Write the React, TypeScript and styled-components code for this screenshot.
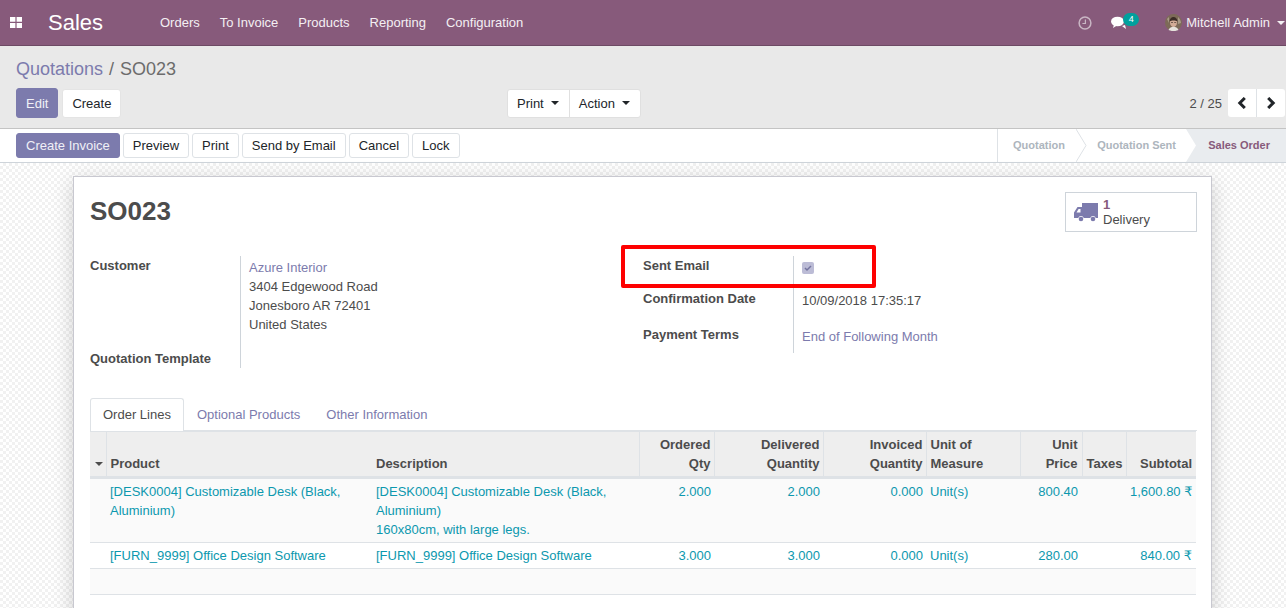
import React from "react";
import styled, { createGlobalStyle } from "styled-components";

const GlobalStyle = createGlobalStyle`
	html, body {
		margin: 0;
		padding: 0;
		height: 100%;
		overflow: hidden;
	}
	body {
		font-family: "Liberation Sans", Arial, sans-serif;
		font-size: 13px;
		line-height: 19px;
		color: #4c4c4c;
		background: #fff;
	}
`;

const Page = styled.div`
	width: 1286px;
	height: 608px;
	overflow: hidden;
	display: flex;
	flex-direction: column;
`;

/* Top navbar */
const Navbar = styled.header`
	flex: none;
	height: 46px;
	box-sizing: border-box;
	background: #875a7b;
	border-bottom: 1px solid #6d4a64;
	display: flex;
	align-items: center;
	color: #fff;
`;

const AppsIcon = styled.svg`
	width: 12px;
	height: 11px;
	margin: 0 0 0 10px;
`;

const Brand = styled.div`
	font-size: 22px;
	margin-left: 26px;
	width: 112px;
	line-height: 45px;
`;

const MenuItem = styled.a`
	margin-right: 20px;
	color: #f4eff3;
`;

const NavRight = styled.div`
	margin-left: auto;
	display: flex;
	align-items: center;
	padding-right: 1px;
`;

const ChatWrap = styled.div`
	position: relative;
	width: 16px;
	height: 14px;
	margin-left: 19px;
	margin-right: 38px;
	display: flex;
`;

const Badge = styled.span`
	position: absolute;
	left: 12px;
	top: -3px;
	width: 16px;
	height: 13px;
	border-radius: 7px;
	background: #00a09d;
	color: #fff;
	font-size: 9px;
	line-height: 12px;
	text-align: center;
`;

const Username = styled.span`
	margin-left: 4px;
	color: #f4eff3;
`;

const Caret = styled.span<{ $color?: string; $gap?: number }>`
	display: inline-block;
	width: 0;
	height: 0;
	border-left: 4px solid transparent;
	border-right: 4px solid transparent;
	border-top: 4px solid ${(p) => p.$color || "#4c4c4c"};
	margin-left: ${(p) => p.$gap ?? 7}px;
	vertical-align: 2px;
`;

/* Control panel */
const ControlPanel = styled.section`
	flex: none;
	height: 83px;
	box-sizing: border-box;
	background: #e9e9e9;
	border-bottom: 1px solid #c4c4c4;
	padding: 12px 1px 0 16px;
`;

const Breadcrumb = styled.div`
	font-size: 18px;
	line-height: 22px;
	color: #6c6c6c;
	margin-bottom: 8px;
`;

const CrumbLink = styled.a`
	color: #7c7bad;
`;

const CrumbSep = styled.span`
	margin: 0 6px;
`;

const PanelRow = styled.div`
	display: grid;
	grid-template-columns: 491px 1fr auto;
	align-items: center;
`;

const ButtonRow = styled.div`
	display: flex;
	align-items: center;
	gap: 4px;
`;

const Button = styled.button<{ $primary?: boolean }>`
	font: inherit;
	box-sizing: border-box;
	height: 25px;
	padding: 0 9px;
	border: 1px solid ${(p) => (p.$primary ? "#7c7bad" : "#dee2e6")};
	border-radius: 3px;
	background: ${(p) => (p.$primary ? "#7c7bad" : "#fff")};
	color: ${(p) => (p.$primary ? "#f0f0f7" : "#212529")};
	white-space: nowrap;
`;

const TopButton = styled(Button)`
	height: ${(p) => (p.$primary ? 30 : 29)}px;
	border-color: ${(p) => (p.$primary ? "#7c7bad" : "#e4e4e4")};
`;

const ButtonGroup = styled.div`
	display: flex;
	height: 29px;
	width: 134px;
	box-sizing: border-box;
	background: #fff;
	border: 1px solid #e0e0e0;
	border-radius: 3px;
`;

const GroupButton = styled.div<{ $divider?: boolean }>`
	display: flex;
	align-items: center;
	padding: 0 10px 0 9px;
	border-left: ${(p) => (p.$divider ? "1px solid #e0e0e0" : "none")};
	color: #212529;
`;

const Pager = styled.div`
	display: flex;
	align-items: center;
	gap: 6px;
	color: #4c4c4c;
`;

const PagerButtons = styled.div`
	display: flex;
	height: 28px;
	background: #fff;
	border-radius: 3px;
`;

const PagerButton = styled.div<{ $divider?: boolean }>`
	width: 28px;
	display: flex;
	align-items: center;
	justify-content: center;
	border-left: ${(p) => (p.$divider ? "1px solid #dee2e6" : "none")};
`;

/* Status bar */
const StatusBar = styled.section`
	flex: none;
	height: 34px;
	box-sizing: border-box;
	background: #fff;
	border-bottom: 1px solid #ced4da;
	display: flex;
	align-items: center;
	justify-content: space-between;
	padding-left: 16px;
`;

const ActionRow = styled.div`
	display: flex;
	gap: 3px;
`;

const Stages = styled.div`
	display: flex;
	align-self: stretch;
	border-left: 1px solid #dee2e6;
	font-size: 11px;
	font-weight: bold;
`;

const Stage = styled.div<{ $width: number; $pad: number; $active?: boolean }>`
	position: relative;
	width: ${(p) => p.$width}px;
	box-sizing: border-box;
	display: flex;
	align-items: center;
	justify-content: flex-end;
	padding-right: ${(p) => p.$pad}px;
	color: ${(p) => (p.$active ? "#875a7b" : "#adb5bd")};
	background: ${(p) => (p.$active ? "#e9ecef" : "transparent")};
`;

const StageArrow = styled.svg`
	position: absolute;
	top: 0;
	width: 11px;
	height: 33px;
	left: 100%;
	z-index: 1;
`;

const ActiveNotch = styled.svg`
	position: absolute;
	top: 0;
	left: 0;
	width: 11px;
	height: 33px;
`;

/* Sheet area */
const Content = styled.main`
	flex: 1;
	min-height: 0;
	background-color: #fff;
	background-image: conic-gradient(#f1f1f1 25%, #fff 0 50%, #f1f1f1 0 75%, #fff 0);
	background-size: 6px 6px;
	padding: 13px 74px 0 73px;
`;

const Sheet = styled.div`
	position: relative;
	height: 460px;
	box-sizing: border-box;
	background: #fff;
	border: 1px solid #c8c8d0;
	box-shadow: 0 5px 20px -1px rgba(0, 0, 0, 0.2);
	padding: 15px 14px 0 16px;
`;

const SheetHeader = styled.div`
	display: flex;
	justify-content: space-between;
	align-items: flex-start;
	height: 64px;
`;

const Title = styled.h1`
	margin: 1px 0 0;
	font-size: 26px;
	line-height: 36px;
	font-weight: bold;
	color: #4c4c4c;
`;

const StatButton = styled.div`
	box-sizing: border-box;
	width: 132px;
	height: 40px;
	border: 1px solid #ced4da;
	display: flex;
	align-items: center;
	gap: 5px;
	padding-left: 8px;
	line-height: 15px;
`;

const TruckIcon = styled.svg`
	width: 24px;
	height: 20px;
	flex: none;
`;

const StatValue = styled.div`
	font-weight: bold;
	color: #875a7b;
`;

const FormGroups = styled.div`
	display: grid;
	grid-template-columns: 553px 1fr;
	height: 142px;
`;

const FieldGrid = styled.div<{ $rows: string }>`
	display: grid;
	grid-template-columns: 150px 1fr;
	grid-template-rows: ${(p) => p.$rows};
	align-content: start;
`;

const FieldLabel = styled.div`
	font-weight: bold;
	color: #4c4c4c;
`;

const FieldValue = styled.div<{ $top?: number }>`
	border-left: 1px solid #ced4da;
	padding: ${(p) => p.$top ?? 0}px 0 0 8px;
	color: #4c4c4c;
`;

const Link = styled.a`
	color: #7c7bad;
`;

const CheckBox = styled.div`
	width: 12px;
	height: 12px;
	margin-top: 6px;
	border-radius: 2px;
	background: #bcbcd6;
	display: flex;
	align-items: center;
	justify-content: center;
`;

const Highlight = styled.div`
	position: absolute;
	left: 547px;
	top: 68px;
	width: 255px;
	height: 43px;
	box-sizing: border-box;
	border: 4px solid #fe0000;
	border-radius: 2px;
	pointer-events: none;
`;

/* Tabs */
const Tabs = styled.nav`
	display: flex;
	height: 33px;
	box-sizing: border-box;
	border-bottom: 1px solid #dee2e6;
`;

const Tab = styled.a<{ $active?: boolean }>`
	box-sizing: border-box;
	height: 33px;
	padding: ${(p) => (p.$active ? "6px 12px 0" : "7px 13px 0")};
	color: ${(p) => (p.$active ? "#4c4c4c" : "#7c7bad")};
	background: ${(p) => (p.$active ? "#fff" : "transparent")};
	border: ${(p) => (p.$active ? "1px solid #dee2e6" : "none")};
	border-bottom: none;
	border-radius: 3px 3px 0 0;
`;

/* Order lines */
const Table = styled.table`
	width: 1106px;
	table-layout: fixed;
	border-collapse: collapse;
`;

const HeadRow = styled.tr`
	background: #eeeeee;
	border-top: 1px solid #dee2e6;
	border-bottom: 3px solid #dee2e6;
`;

const Th = styled.th<{ $right?: boolean; $rule?: boolean; $tight?: boolean }>`
	height: 42px;
	box-sizing: border-box;
	padding: 3px ${(p) => (p.$tight ? 3 : 4)}px 3px 4px;
	vertical-align: bottom;
	text-align: ${(p) => (p.$right ? "right" : "left")};
	font-weight: bold;
	color: #4c4c4c;
	border-left: ${(p) => (p.$rule ? "1px solid #dee2e6" : "none")};
`;

const Row = styled.tr<{ $shade?: boolean; $height: number }>`
	height: ${(p) => p.$height}px;
	background: ${(p) => (p.$shade ? "#fafafa" : "#fff")};
	border-bottom: 1px solid #dee2e6;
`;

const Td = styled.td<{ $right?: boolean; $tight?: boolean }>`
	padding: 3px ${(p) => (p.$tight ? 3 : 4)}px 3px 4px;
	vertical-align: top;
	text-align: ${(p) => (p.$right ? "right" : "left")};
	color: #0c98ae;
`;

const Amount = styled.span`
	white-space: nowrap;
`;

const Rupee = styled.span`
	font-family: "DejaVu Sans", sans-serif;
`;

const columns = [16, 266, 267, 75, 109, 103, 94, 62, 44, 70];

const rows = [
	{
		product: "[DESK0004] Customizable Desk (Black, Aluminium)",
		description: ["[DESK0004] Customizable Desk (Black, Aluminium)", "160x80cm, with large legs."],
		ordered: "2.000",
		delivered: "2.000",
		price: "800.40",
		subtotal: "1,600.80",
		height: 65,
		shade: true,
	},
	{
		product: "[FURN_9999] Office Design Software",
		description: ["[FURN_9999] Office Design Software"],
		ordered: "3.000",
		delivered: "3.000",
		price: "280.00",
		subtotal: "840.00",
		height: 26,
		shade: false,
	},
];

const App = (): JSX.Element => (
	<Page>
		<GlobalStyle />
		<Navbar>
			<AppsIcon viewBox="0 0 12 11">
				<path d="M0 0h5.4v4.8H0zM6.6 0H12v4.8H6.6zM0 6h5.4v5H0zM6.6 6H12v5H6.6z" fill="#fff" />
			</AppsIcon>
			<Brand>Sales</Brand>
			<MenuItem>Orders</MenuItem>
			<MenuItem>To Invoice</MenuItem>
			<MenuItem>Products</MenuItem>
			<MenuItem>Reporting</MenuItem>
			<MenuItem>Configuration</MenuItem>
			<NavRight>
				<svg width="14" height="14" viewBox="0 0 14 14">
					<circle cx="7" cy="7" r="5.9" fill="none" stroke="#c9b6c4" strokeWidth="1.5" />
					<path d="M7.4 3.6v3.9H4.4" fill="none" stroke="#c9b6c4" strokeWidth="1.2" />
				</svg>
				<ChatWrap>
					<svg width="16" height="14" viewBox="0 0 16 14">
						<ellipse cx="6.5" cy="5.5" rx="6.5" ry="4.8" fill="#fff" />
						<path d="M3 8.5 2 12l4-2.5zM11 10l4 3-1-4z" fill="#fff" />
					</svg>
					<Badge>4</Badge>
				</ChatWrap>
				<svg width="17" height="17" viewBox="0 0 17 17">
					<circle cx="8.5" cy="8.5" r="8.5" fill="#7d6a58" />
					<path d="M13 3c2 2 3 4 3 6l-3 1zM2 5l2-2v6z" fill="#a99a86" />
					<path d="M5 8.500c0-3 1.200-4.500 3.500-4.500s3.500 1.500 3.500 4.500c0 2.800-1.700 4.500-3.500 4.500S5 11.300 5 8.500z" fill="#d2ab96" />
					<path d="M4.500 7.500c.3-3 1.800-4.500 4-4.500s3.700 1.500 4 4.500c-2-1.400-6-1.400-8 0z" fill="#3b2c26" />
					<path d="M6 8.500h2M9.200 8.500h2" stroke="#4a3a34" strokeWidth="0.700" />
					<path d="M3.500 16c1-2.500 2.800-3.200 5-3.200s4 .7 5 3.200c-3 1.500-7 1.500-10 0z" fill="#e6e2dc" />
				</svg>
				<Username>Mitchell Admin</Username>
				<Caret $color="#f4eff3" $gap={7} />
			</NavRight>
		</Navbar>

		<ControlPanel>
			<Breadcrumb>
				<CrumbLink>Quotations</CrumbLink>
				<CrumbSep>/</CrumbSep>
				SO023
			</Breadcrumb>
			<PanelRow>
				<ButtonRow>
					<TopButton $primary>Edit</TopButton>
					<TopButton>Create</TopButton>
				</ButtonRow>
				<ButtonGroup>
					<GroupButton>
						Print
						<Caret $color="#212529" />
					</GroupButton>
					<GroupButton $divider>
						Action
						<Caret $color="#212529" />
					</GroupButton>
				</ButtonGroup>
				<Pager>
					2 / 25
					<PagerButtons>
						<PagerButton>
							<svg width="10" height="12" viewBox="0 0 10 12">
								<path d="M7.800 1 2.800 6l5 5" fill="none" stroke="#212529" strokeWidth="3" />
							</svg>
						</PagerButton>
						<PagerButton $divider>
							<svg width="10" height="12" viewBox="0 0 10 12">
								<path d="M2.200 1l5 5-5 5" fill="none" stroke="#212529" strokeWidth="3" />
							</svg>
						</PagerButton>
					</PagerButtons>
				</Pager>
			</PanelRow>
		</ControlPanel>

		<StatusBar>
			<ActionRow>
				<Button $primary>Create Invoice</Button>
				<Button>Preview</Button>
				<Button>Print</Button>
				<Button>Send by Email</Button>
				<Button>Cancel</Button>
				<Button>Lock</Button>
			</ActionRow>
			<Stages>
				<Stage $width={78} $pad={11}>
					Quotation
					<StageArrow viewBox="0 0 11 33">
						<path d="M0 0l10 16.500L0 33" fill="#fff" stroke="#dee2e6" />
					</StageArrow>
				</Stage>
				<Stage $width={110} $pad={10}>
					Quotation Sent
				</Stage>
				<Stage $width={100} $pad={16} $active>
					<ActiveNotch viewBox="0 0 11 33">
						<path d="M0 0l10 16.500L0 33z" fill="#fff" />
					</ActiveNotch>
					Sales Order
				</Stage>
			</Stages>
		</StatusBar>

		<Content>
			<Sheet>
				<SheetHeader>
					<Title>SO023</Title>
					<StatButton>
						<TruckIcon viewBox="0 0 24 20">
							<path
								d="M8 1h16v15h-2.200a3 3 0 0 0-5.600 0H9.800a3 3 0 0 0-5.600 0H0V10.500L3.500 5H8zM2.500 10.500H6.500V7H4.600z"
								fill="#7c7bad"
								fillRule="evenodd"
							/>
							<circle cx="7" cy="17" r="2.300" fill="#7c7bad" />
							<circle cx="19" cy="17" r="2.300" fill="#7c7bad" />
						</TruckIcon>
						<div>
							<StatValue>1</StatValue>
							Delivery
						</div>
					</StatButton>
				</SheetHeader>

				<FormGroups>
					<FieldGrid $rows="93px 19px">
						<FieldLabel>Customer</FieldLabel>
						<FieldValue $top={2}>
							<Link>Azure Interior</Link>
							<br />
							3404 Edgewood Road
							<br />
							Jonesboro AR 72401
							<br />
							United States
						</FieldValue>
						<FieldLabel>Quotation Template</FieldLabel>
						<FieldValue />
					</FieldGrid>
					<FieldGrid $rows="33px 36px 28px">
						<FieldLabel>Sent Email</FieldLabel>
						<FieldValue>
							<CheckBox>
								<svg width="8" height="8" viewBox="0 0 8 8">
									<path d="M1 4l2 2 4-4" fill="none" stroke="#74749f" strokeWidth="1.500" />
								</svg>
							</CheckBox>
						</FieldValue>
						<FieldLabel>Confirmation Date</FieldLabel>
						<FieldValue $top={2}>10/09/2018 17:35:17</FieldValue>
						<FieldLabel>Payment Terms</FieldLabel>
						<FieldValue $top={2}>
							<Link>End of Following Month</Link>
						</FieldValue>
					</FieldGrid>
				</FormGroups>
				<Highlight />

				<Tabs>
					<Tab $active>Order Lines</Tab>
					<Tab>Optional Products</Tab>
					<Tab>Other Information</Tab>
				</Tabs>

				<Table>
					<colgroup>
						{columns.map((w, i) => (
							<col key={i} width={w} />
						))}
					</colgroup>
					<thead>
						<HeadRow>
							<Th>
								<Caret $gap={1} />
							</Th>
							<Th $rule>Product</Th>
							<Th>Description</Th>
							<Th $rule $right $tight>
								Ordered Qty
							</Th>
							<Th $rule $right $tight>
								Delivered Quantity
							</Th>
							<Th $rule $right $tight>
								Invoiced Quantity
							</Th>
							<Th $rule>Unit of Measure</Th>
							<Th $rule $right>
								Unit Price
							</Th>
							<Th $rule>Taxes</Th>
							<Th $rule $right>
								Subtotal
							</Th>
						</HeadRow>
					</thead>
					<tbody>
						{rows.map((r) => (
							<Row key={r.product} $shade={r.shade} $height={r.height}>
								<Td />
								<Td>{r.product}</Td>
								<Td>
									{r.description.map((d) => (
										<div key={d}>{d}</div>
									))}
								</Td>
								<Td $right $tight>
									{r.ordered}
								</Td>
								<Td $right $tight>
									{r.delivered}
								</Td>
								<Td $right $tight>
									0.000
								</Td>
								<Td>Unit(s)</Td>
								<Td $right>{r.price}</Td>
								<Td />
								<Td $right>
									<Amount>
										{r.subtotal} <Rupee>₹</Rupee>
									</Amount>
								</Td>
							</Row>
						))}
						<Row $shade $height={26}>
							<Td colSpan={10} />
						</Row>
					</tbody>
				</Table>
			</Sheet>
		</Content>
	</Page>
);

export default App;
